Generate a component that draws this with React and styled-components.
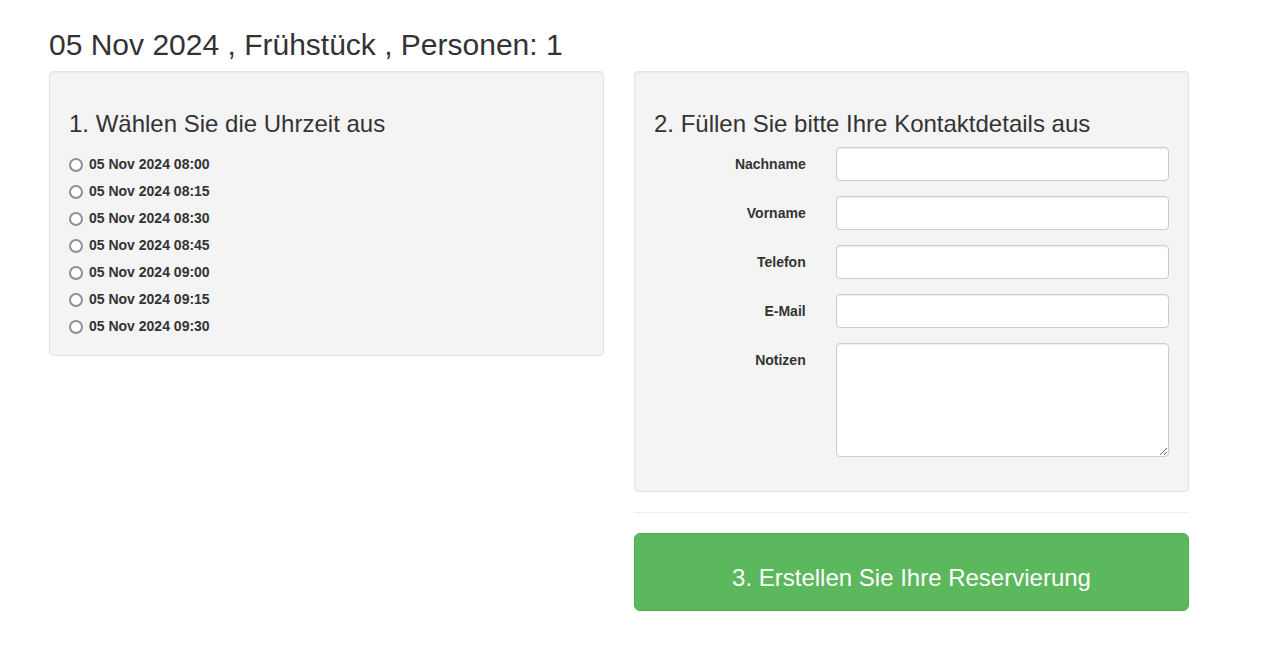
import React from "react";
import styled, { createGlobalStyle } from "styled-components";

const GlobalStyle = createGlobalStyle`
  html, body {
    margin: 0;
    padding: 0;
    background: #ffffff;
  }
  body {
    font-family: "Liberation Sans", Helvetica, Arial, sans-serif;
    font-size: 14px;
    line-height: 1.42857;
    color: #333333;
  }
  * {
    box-sizing: border-box;
  }
`;

const Container = styled.div`
  width: 1140px;
  margin-left: 49px;
  padding-top: 28px;
`;

const Title = styled.h2`
  margin: 0 0 10px;
  font-size: 30px;
  font-weight: 400;
  line-height: 33px;
`;

const Columns = styled.div`
  display: grid;
  grid-template-columns: 1fr 1fr;
  column-gap: 30px;
  align-items: start;
`;

const Column = styled.div`
  display: flex;
  flex-direction: column;
`;

const Well = styled.div`
  background: #f4f4f4;
  border: 1px solid #e3e3e3;
  border-radius: 4px;
  padding: 19px 19px ${(p) => p.$bottom}px;
  box-shadow: inset 0 1px 1px rgba(0, 0, 0, 0.05);
  margin-bottom: 20px;
`;

const StepTitle = styled.h3`
  margin: 20px 0 ${(p) => p.$gap}px;
  font-size: 24px;
  font-weight: 400;
  line-height: 26px;
`;

const SlotList = styled.div`
  display: flex;
  flex-direction: column;
  gap: 7px;
`;

const Slot = styled.label`
  display: flex;
  align-items: center;
  height: 20px;
  font-weight: 700;
  font-size: 14px;
  cursor: pointer;
`;

const Radio = styled.input`
  appearance: none;
  width: 14px;
  height: 14px;
  margin: 0 6px 0 0;
  border: 2px solid #8f8f99;
  border-radius: 50%;
  background: #ffffff;
  flex-shrink: 0;

  &:checked {
    background: radial-gradient(circle, #4a6ee0 0 3px, #ffffff 3.5px);
  }
`;

const FormRow = styled.div`
  display: grid;
  grid-template-columns: 151.7px 1fr;
  column-gap: 30px;
  margin-bottom: 15px;
`;

const FieldLabel = styled.label`
  text-align: right;
  padding-top: 7px;
  font-weight: 700;
  font-size: 14px;
  line-height: 20px;
`;

const Input = styled.input`
  display: block;
  width: 100%;
  height: 34px;
  padding: 6px 12px;
  font: inherit;
  color: #555;
  background: #fff;
  border: 1px solid #ccc;
  border-radius: 4px;
  box-shadow: inset 0 1px 1px rgba(0, 0, 0, 0.075);
  outline: none;
`;

const TextArea = styled.textarea`
  display: block;
  width: 100%;
  height: 114px;
  padding: 6px 12px;
  font: inherit;
  color: #555;
  background: #fff;
  border: 1px solid #ccc;
  border-radius: 4px;
  box-shadow: inset 0 1px 1px rgba(0, 0, 0, 0.075);
  resize: vertical;
  outline: none;
`;

const Divider = styled.hr`
  margin: 0 0 20px;
  border: 0;
  border-top: 1px solid #eeeeee;
`;

const SubmitButton = styled.button`
  width: 100%;
  height: 78px;
  padding: 12px 16px 0;
  background: #5cb85c;
  border: 1px solid #4cae4c;
  border-radius: 6px;
  color: #ffffff;
  font-family: "Liberation Sans", Helvetica, Arial, sans-serif;
  font-size: 24px;
  line-height: 32px;
  cursor: pointer;
`;

const slots = ["08:00", "08:15", "08:30", "08:45", "09:00", "09:15", "09:30"];
const fields = ["Nachname", "Vorname", "Telefon", "E-Mail"];

const App = () => (
  <>
    <GlobalStyle />
    <Container>
      <Title>05 Nov 2024 , Frühstück , Personen: 1</Title>
      <Columns>
        <Column>
          <Well $bottom={18}>
            <StepTitle $gap={18}>1. Wählen Sie die Uhrzeit aus</StepTitle>
            <SlotList>
              {slots.map((time) => (
                <Slot key={time}>
                  <Radio type="radio" name="slot" value={time} />
                  05 Nov 2024 {time}
                </Slot>
              ))}
            </SlotList>
          </Well>
        </Column>
        <Column>
          <Well $bottom={19}>
            <StepTitle $gap={10}>2. Füllen Sie bitte Ihre Kontaktdetails aus</StepTitle>
            {fields.map((name) => (
              <FormRow key={name}>
                <FieldLabel>{name}</FieldLabel>
                <Input type={name === "E-Mail" ? "email" : "text"} />
              </FormRow>
            ))}
            <FormRow>
              <FieldLabel>Notizen</FieldLabel>
              <TextArea />
            </FormRow>
          </Well>
          <Divider />
          <SubmitButton>3. Erstellen Sie Ihre Reservierung</SubmitButton>
        </Column>
      </Columns>
    </Container>
  </>
);

export default App;
